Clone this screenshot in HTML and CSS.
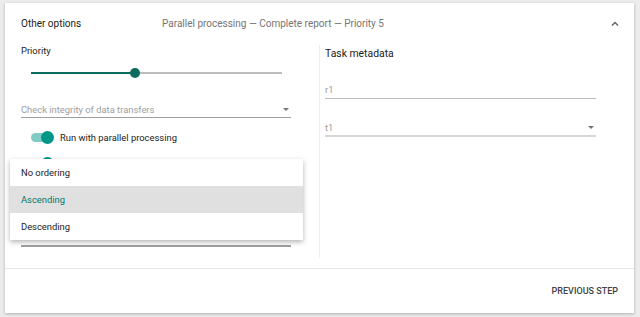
FILE: index.html
```html
<!DOCTYPE html>
<html lang="en">
<head>
  <meta charset="UTF-8" />
  <title>Task options</title>
  <link rel="stylesheet" href="styles.css">
</head>
<body>
  <div class="card">
    <!-- header of the expanded panel -->
    <div class="panel-header">
      <span class="panel-title">Other options</span>
      <span class="panel-summary">Parallel processing — Complete report — Priority 5</span>
      <svg class="chevron" width="8" height="5" viewBox="0 0 8 5">
        <polyline points="1,4.5 4,1.5 7,4.5" fill="none" stroke="#616161" stroke-width="1.4" />
      </svg>
    </div>

    <div class="panel-body">
      <div class="col col-left">
        <div class="label">Priority</div>
        <div class="slider">
          <div class="slider-track">
            <div class="slider-fill" style="width: 104px"></div>
            <div class="slider-thumb"></div>
          </div>
        </div>

        <div class="select select-integrity">
          <span class="placeholder">Check integrity of data transfers</span>
          <span class="arrow"></span>
        </div>

        <div class="toggle-row">
          <span class="toggle on"><span class="knob"></span></span>
          <span class="toggle-label">Run with parallel processing</span>
        </div>
        <div class="toggle-row toggle-second">
          <span class="toggle on"><span class="knob"></span></span>
          <span class="toggle-label">Generate complete report</span>
        </div>

        <!-- ordering select, its value is hidden while the menu is open -->
        <div class="select select-order">
          <span class="arrow"></span>
        </div>

        <ul class="menu">
          <li class="menu-item">No ordering</li>
          <li class="menu-item selected">Ascending</li>
          <li class="menu-item">Descending</li>
        </ul>
      </div>

      <div class="col col-right">
        <div class="section-title">Task metadata</div>
        <div class="input input-r">r1</div>
        <div class="select select-t">
          <span class="value-muted">t1</span>
          <span class="arrow"></span>
        </div>
      </div>
    </div>

    <div class="panel-footer">
      <button class="btn-flat">Previous step</button>
    </div>
  </div>
</body>
</html>
```

FILE: styles.css
```css
body {
  margin: 0;
  padding: 3px 6px 4px 5px;
  font-family: Roboto, 'Liberation Sans', sans-serif;
  background-color: #ececec;
}

.card {
  background-color: #fff;
  height: 310px;
  box-shadow: 0 1px 3px rgba(0, 0, 0, 0.25);
  display: flex;
  flex-direction: column;
}

.panel-header {
  height: 40px;
  display: flex;
  align-items: center;
  padding: 0 15px 0 16px;
  font-size: 10px;
}

.panel-title {
  width: 141px;
  color: #212121;
}

.panel-summary {
  flex: 1;
  color: #757575;
}

.chevron {
  display: block;
}

.panel-body {
  height: 225px;
  display: flex;
}

.col {
  box-sizing: border-box;
}

.col-left {
  position: relative;
  width: 315px;
  padding: 0 28px 0 16px;
  margin: 2px 0 10px;
  border-right: 1px solid #eeeeee;
}

.label {
  font-size: 9.4px;
  line-height: 12px;
  color: #212121;
}

.slider {
  height: 24px;
  margin-top: 4px;
  display: flex;
  align-items: center;
}

.slider-track {
  position: relative;
  margin-left: 10px;
  width: 251px;
  height: 1.5px;
  background-color: #bdbdbd;
}

.slider-fill {
  height: 100%;
  background-color: #0d6b5e;
}

.slider-thumb {
  position: absolute;
  left: 99px;
  top: -4px;
  width: 10px;
  height: 10px;
  border-radius: 50%;
  background-color: #0d6b5e;
}

.select {
  display: flex;
  align-items: center;
  justify-content: space-between;
  height: 16px;
  font-size: 9.4px;
  border-bottom: 1px solid #9e9e9e;
}

.select-integrity {
  margin-top: 16px;
}

.placeholder {
  color: #9e9e9e;
}

.arrow {
  width: 0;
  height: 0;
  margin-right: 2px;
  border-left: 3.5px solid transparent;
  border-right: 3.5px solid transparent;
  border-top: 3.5px solid #757575;
}

.toggle-row {
  display: flex;
  align-items: center;
  height: 20px;
  margin-top: 9px;
  font-size: 9.4px;
  color: #212121;
}

.toggle-second {
  margin-top: 6px;
}

.toggle {
  position: relative;
  margin-left: 10px;
  width: 22px;
  height: 9px;
  border-radius: 5px;
  background-color: #80cbc4;
}

.toggle .knob {
  position: absolute;
  right: -1px;
  top: -2px;
  width: 13px;
  height: 13px;
  border-radius: 50%;
  background-color: #009688;
}

.toggle-label {
  margin-left: 7px;
}

.select-order {
  justify-content: flex-end;
  margin-top: 56px;
  border-bottom: 2px solid #9e9e9e;
}

.menu {
  position: absolute;
  left: 5px;
  top: 114px;
  width: 293px;
  margin: 0;
  padding: 0;
  list-style: none;
  background-color: #fff;
  box-shadow: 0 2px 5px rgba(0, 0, 0, 0.3);
  z-index: 10;
}

.menu-item {
  height: 27px;
  line-height: 27px;
  padding-left: 11px;
  font-size: 9.4px;
  color: #212121;
}

.menu-item.selected {
  background-color: #e0e0e0;
  color: #00796b;
}

.col-right {
  flex: 1;
  padding: 0 38px 0 5px;
}

.section-title {
  margin-top: 4px;
  font-size: 10.4px;
  line-height: 14px;
  color: #212121;
}

.input {
  height: 16px;
  line-height: 16px;
  font-size: 9.4px;
  color: #9e9e9e;
  border-bottom: 1px solid #bdbdbd;
}

.input-r {
  margin-top: 21px;
}

.select-t {
  margin-top: 20px;
  border-bottom: 2px solid #d6d6d6;
}

.value-muted {
  color: #9e9e9e;
}

.panel-footer {
  flex: 1;
  display: flex;
  align-items: center;
  justify-content: flex-end;
  padding-right: 16px;
  border-top: 1px solid #e6e6e6;
}

.btn-flat {
  padding: 0;
  border: none;
  background: none;
  font-family: Roboto, 'Liberation Sans', sans-serif;
  font-size: 9px;
  font-weight: 500;
  text-transform: uppercase;
  color: #424242;
  cursor: pointer;
}
```
